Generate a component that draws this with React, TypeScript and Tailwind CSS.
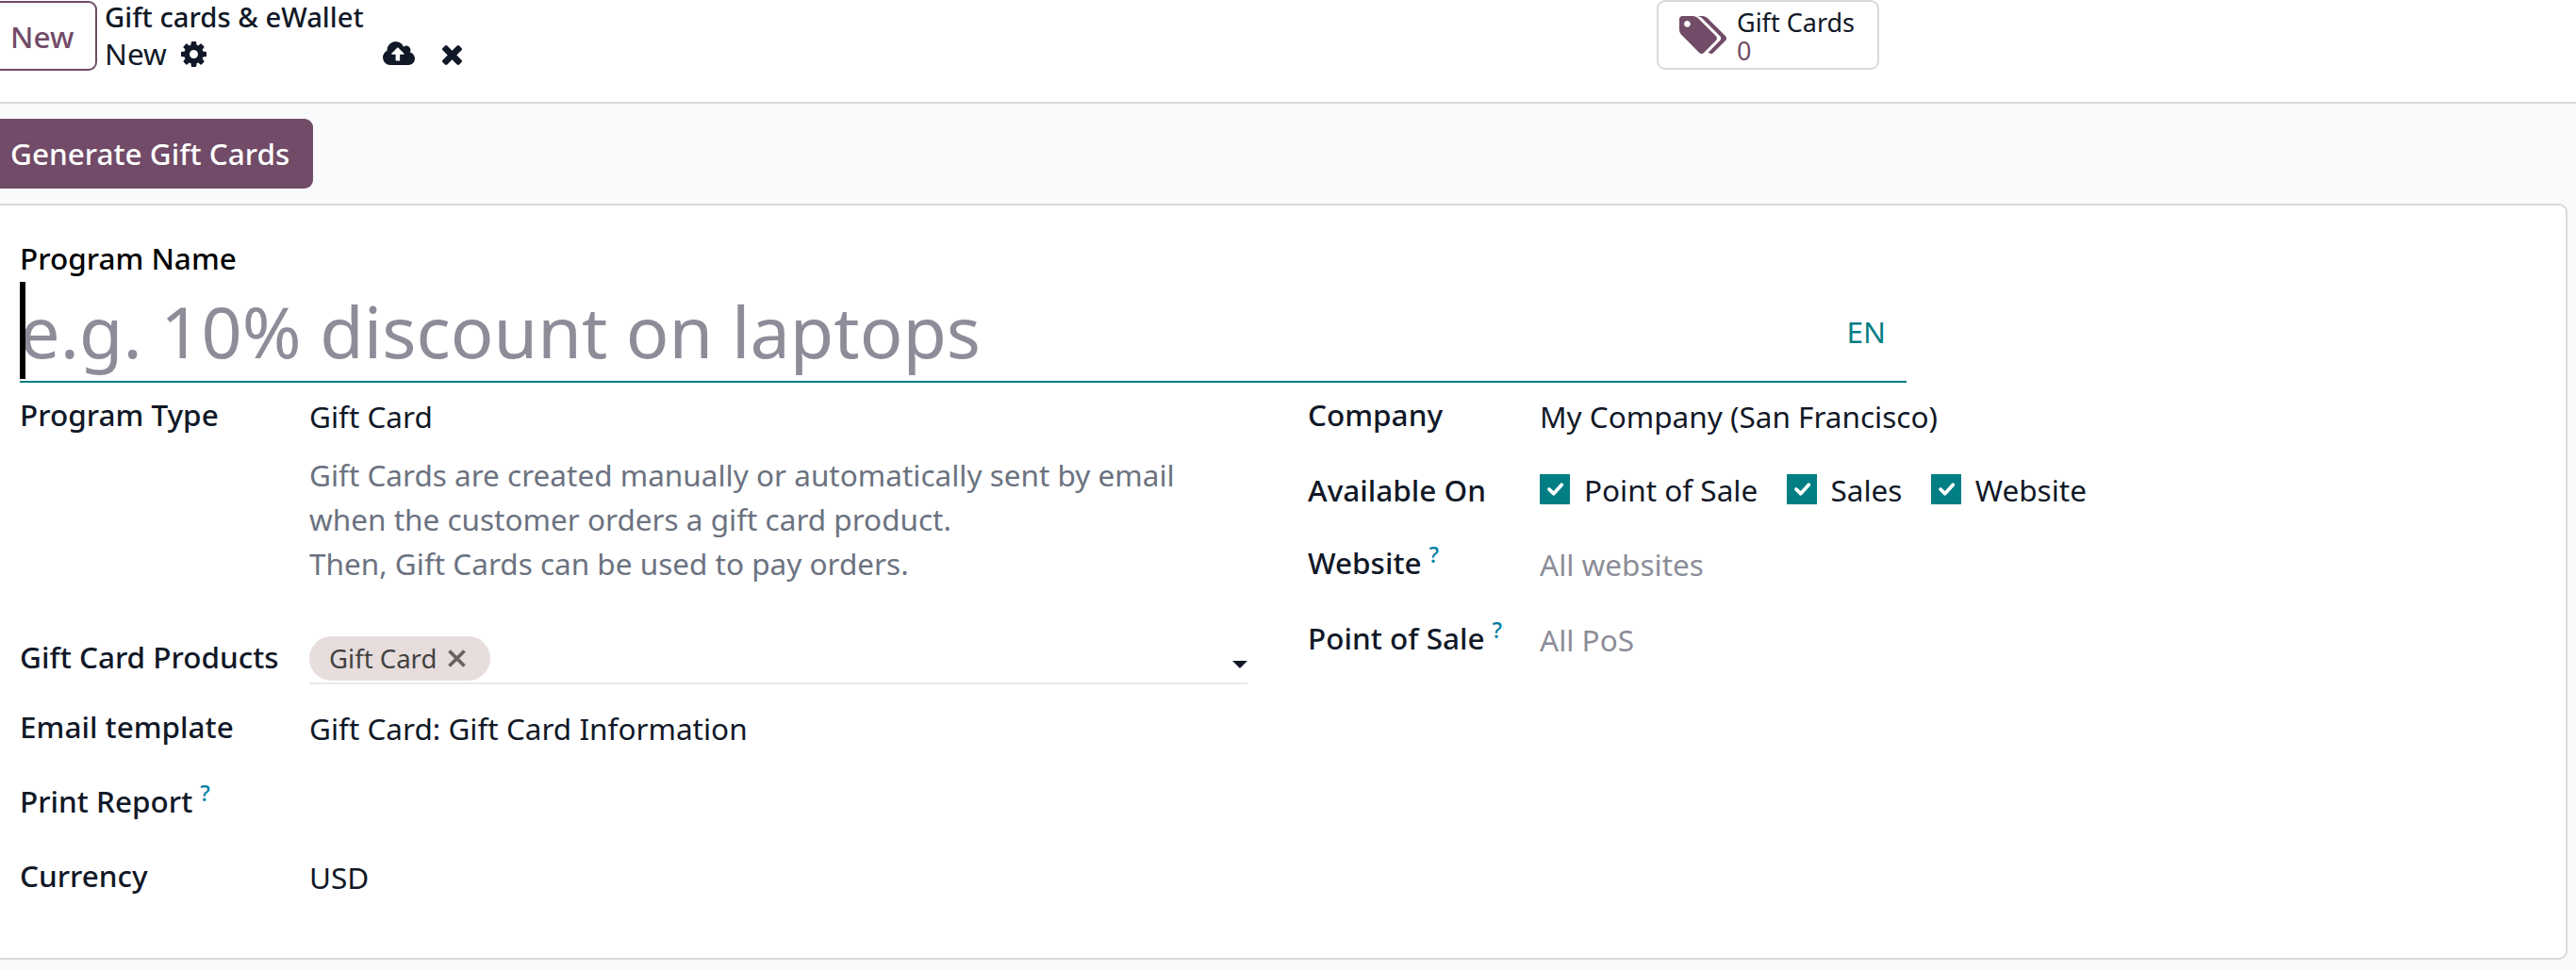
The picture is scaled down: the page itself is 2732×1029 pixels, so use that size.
import React from "react";

type IconProps = { className: string; viewBox: string; d: string };

const Icon = ({ className, viewBox, d }: IconProps) => (
  <svg className={`block shrink-0 fill-current ${className}`} viewBox={viewBox} aria-hidden="true">
    <path d={d} />
  </svg>
);

const COG =
  "M1152 896q0-106-75-181t-181-75-181 75-75 181 75 181 181 75 181-75 75-181zm512-109v222q0 12-8 23t-20 13l-185 28q-19 54-39 91 35 50 107 138 10 12 10 25t-9 23q-27 37-99 108t-94 71q-12 0-26-9l-138-108q-44 23-91 38-16 136-29 186-7 28-36 28h-222q-14 0-24.5-8.5t-11.5-21.5l-28-184q-49-16-90-37l-141 107q-10 9-25 9-14 0-25-11-126-114-165-168-7-10-7-23 0-12 8-23 15-21 51-66.5t54-70.5q-27-50-41-99l-183-27q-13-2-21-12.5t-8-23.5v-222q0-12 8-23t19-13l186-28q14-46 39-92-40-57-107-138-10-12-10-24 0-10 9-23 26-36 98.5-107.5t94.5-71.5q13 0 26 10l138 107q44-23 91-38 16-136 29-186 7-28 36-28h222q14 0 24.5 8.5t11.5 21.5l28 184q49 16 90 37l142-107q9-9 24-9 13 0 25 10 129 119 165 170 7 8 7 22 0 12-8 23-15 21-51 66.5t-54 70.5q26 50 41 98l183 28q13 2 21 12.5t8 23.5z";
const CLOUD =
  "M1216 864q0-14-9-23l-352-352q-9-9-23-9t-23 9l-351 351q-10 12-10 24 0 14 9 23t23 9h224v352q0 13 9.5 22.5t22.5 9.5h192q13 0 22.5-9.5t9.5-22.5v-352h224q13 0 22.5-9.5t9.5-22.5zm640 288q0 159-112.5 271.5t-271.5 112.5h-1088q-185 0-316.5-131.5t-131.5-316.5q0-130 70-240t188-165q-2-30-2-43 0-212 150-362t362-150q156 0 285.5 87t188.5 231q71-62 166-62 106 0 181 75t75 181q0 76-41 138 130 31 213.5 135.5t83.5 238.5z";
const TIMES =
  "M1490 1322q0 40-28 68l-136 136q-28 28-68 28t-68-28l-294-294-294 294q-28 28-68 28t-68-28l-136-136q-28-28-28-68t28-68l294-294-294-294q-28-28-28-68t28-68l136-136q28-28 68-28t68 28l294 294 294-294q28-28 68-28t68 28l136 136q28 28 28 68t-28 68l-294 294 294 294q28 28 28 68z";
const TAGS =
  "M576 448q0-53-37.5-90.5t-90.5-37.5-90.5 37.5-37.5 90.5 37.5 90.5 90.5 37.5 90.5-37.5 37.5-90.5zm1067 576q0 53-37 90l-491 492q-39 37-91 37-53 0-90-37l-715-716q-38-37-64.5-101t-26.5-117v-416q0-52 38-90t90-38h416q53 0 117 26.5t102 64.5l715 714q37 39 37 91zm384 0q0 53-37 90l-491 492q-39 37-91 37-36 0-59-14t-53-45l470-470q37-37 37-90 0-52-37-91l-715-714q-38-38-102-64.5t-117-26.5h224q53 0 117 26.5t102 64.5l715 714q37 39 37 91z";

const Label = ({ children, help }: { children: string; help?: boolean }) => (
  <div className="flex shrink-0 font-medium">
    {children}
    {help && (
      <span className="-mt-[3px] ml-[8px] text-[23.6px] leading-[36px] font-medium text-[#0180a5]">?</span>
    )}
  </div>
);

const Check = ({ label }: { label: string }) => (
  <label className="flex">
    <span className="mt-[7px] mr-[15px] flex size-8 shrink-0 items-center justify-center bg-[#017e84]">
      <svg className="size-8" viewBox="0 0 32 32" fill="none" aria-hidden="true">
        <path d="M10 16l4.7 4.7l8.6-9.4" stroke="#fff" strokeWidth="3.8" strokeLinecap="round" strokeLinejoin="round" />
      </svg>
    </span>
    {label}
  </label>
);

export default function App() {
  return (
    <div className="flex h-[1029px] w-[2732px] flex-col overflow-hidden bg-[#f9fafb] font-['Noto_Sans',sans-serif] text-[31.5px] leading-[47px] whitespace-nowrap text-[#111827]">
      <header className="flex h-[110px] shrink-0 items-start border-b-2 border-[#d8dadd] bg-white">
        <button className="mt-px flex h-[74px] w-[103px] items-start rounded-r-[9px] border-2 border-l-0 border-[#714b67] pt-[12px] pl-[11px] font-medium text-[#714b67]">
          New
        </button>
        <div className="ml-[8px] w-[379px]">
          <div className="h-[33px] text-[29.25px] leading-[36px] font-medium">Gift cards &amp; eWallet</div>
          <div className="flex h-[47px]">
            <span className="w-[81px]">New</span>
            <Icon className="mt-[11px] size-[27px]" viewBox="128 128 1536 1536" d={COG} />
            <Icon className="mt-[11px] ml-[186.6px] h-[25px] w-[34px]" viewBox="-64 128 1920 1408" d={CLOUD} />
            <Icon className="mt-[15px] ml-[29px] size-[21px]" viewBox="302 366 1188 1188" d={TIMES} />
          </div>
        </div>
        <button className="ml-[1267px] flex h-[74px] w-[236px] items-start rounded-[9px] border-2 border-[#d8dadd] text-left text-[27px] leading-[29.7px]">
          <Icon className="mt-[15px] ml-[22px] h-[40px] w-[50px] text-[#714b67]" viewBox="128 128 1899 1515" d={TAGS} />
          <span className="mt-[7px] ml-[11px]">
            <span className="block">Gift Cards</span>
            <span className="block text-[#714b67]">0</span>
          </span>
        </button>
      </header>

      <div className="mt-4 flex shrink-0">
        <button className="flex h-[74px] w-[332px] items-start rounded-r-[9px] bg-[#714b67] pt-[13px] pl-[11px] font-medium text-white">
          Generate Gift Cards
        </button>
      </div>

      <main className="mt-4 h-[802px] w-[2723px] shrink-0 rounded-r-[9px] border-2 border-l-0 border-[#d8dadd] bg-white pl-[21px]">
        <div className="mt-[32px] font-medium text-black">Program Name</div>
        <div className="mt-[2px] flex h-[107px] w-[2001px] items-start justify-between border-b-2 border-[#017e84]">
          <div className="relative text-[75.6px] leading-[103px] text-[#8c8d98]">
            e.g. 10% discount on laptops
            <span className="absolute top-0 left-0 h-[103px] w-[6px] bg-black" />
          </div>
          <span className="mt-[29px] mr-[22px] text-[#017e84]">EN</span>
        </div>

        <div className="mt-[10px] flex">
          <section className="w-[1366px]">
            <div className="flex h-[257px]">
              <div className="w-[307px]"><Label>Program Type</Label></div>
              <div className="pt-[2px]">
                <div>Gift Card</div>
                <p className="mt-[15px] text-[#6b7280]">
                  Gift Cards are created manually or automatically sent by email
                  <br />
                  when the customer orders a gift card product.
                  <br />
                  Then, Gift Cards can be used to pay orders.
                </p>
              </div>
            </div>
            <div className="flex h-[74px]">
              <div className="w-[307px]"><Label>Gift Card Products</Label></div>
              <div className="mt-[2px] flex h-[51px] w-[995px] items-start justify-between border-b-2 border-[#e7e9ed]">
                <span className="flex h-[47px] w-[192px] items-center rounded-full bg-[#e6dddc] pl-[21px] text-[27.56px] text-[#424242]">
                  <span className="-mt-px">Gift Card</span>
                  <svg className="ml-[11.5px] size-[19px]" viewBox="0 0 19 19" aria-hidden="true">
                    <path d="M1.5 1.5L17.5 17.5M17.5 1.5L1.5 17.5" stroke="#666362" strokeWidth="3.8" />
                  </svg>
                </span>
                <svg className="mt-[26px] h-[8px] w-[16px]" viewBox="0 0 16 8" aria-hidden="true">
                  <path d="M0 0h16L8 8z" fill="#111827" />
                </svg>
              </div>
            </div>
            <div className="flex h-[79px]">
              <div className="w-[307px]"><Label>Email template</Label></div>
              <div className="pt-[2px]">Gift Card: Gift Card Information</div>
            </div>
            <div className="flex h-[79px]">
              <Label help>Print Report</Label>
            </div>
            <div className="flex h-[49px]">
              <div className="w-[307px]"><Label>Currency</Label></div>
              <div className="pt-[2px]">USD</div>
            </div>
          </section>

          <section>
            <div className="flex h-[80px]">
              <div className="w-[246px]"><Label>Company</Label></div>
              <div className="pt-[2px]">My Company (San Francisco)</div>
            </div>
            <div className="flex h-[77px]">
              <div className="w-[246px]"><Label>Available On</Label></div>
              <div className="flex gap-[30.3px]">
                <Check label="Point of Sale" />
                <Check label="Sales" />
                <Check label="Website" />
              </div>
            </div>
            <div className="flex h-[80px]">
              <div className="w-[246px]"><Label help>Website</Label></div>
              <div className="pt-[2px] text-[#8c8d98]">All websites</div>
            </div>
            <div className="flex h-[49px]">
              <div className="w-[246px]"><Label help>Point of Sale</Label></div>
              <div className="pt-[2px] text-[#8c8d98]">All PoS</div>
            </div>
          </section>
        </div>
      </main>
    </div>
  );
}
